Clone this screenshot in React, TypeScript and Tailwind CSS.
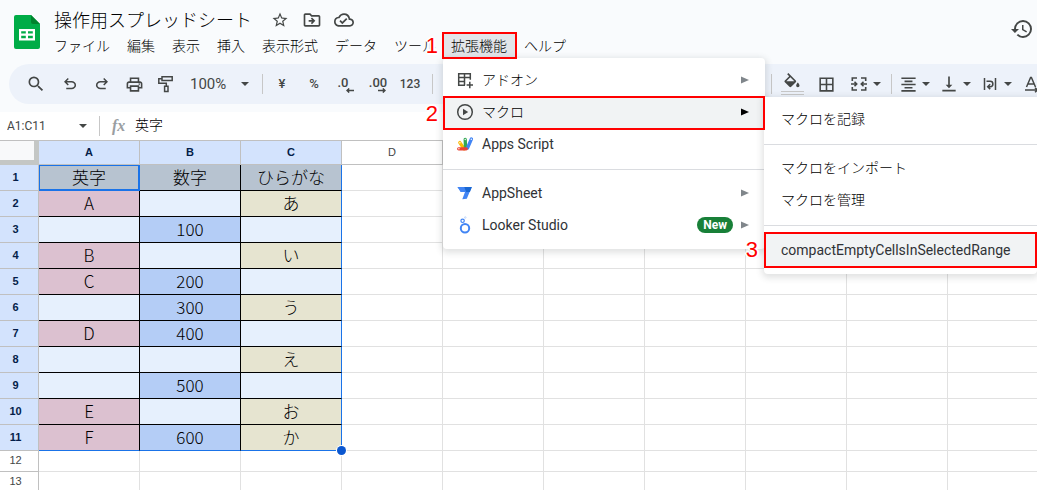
import type { ReactNode } from "react";
import {
  MdStarBorder,
  MdOutlineDriveFileMove,
  MdOutlineCloudDone,
  MdHistory,
  MdSearch,
  MdOutlinePrint,
  MdFormatColorFill,
  MdBorderAll,
  MdFormatAlignCenter,
  MdVerticalAlignBottom,
} from "react-icons/md";

const SANS = "font-['Roboto','Noto_Sans_CJK_JP',sans-serif]";

function SheetsLogo() {
  return (
    <svg width="26" height="34" viewBox="0 0 26 34" aria-hidden="true">
      <path d="M2 0h15l9 9v23a2 2 0 0 1-2 2H2a2 2 0 0 1-2-2V2a2 2 0 0 1 2-2z" fill="#00ac47" />
      <path d="M17 0l9 9h-7a2 2 0 0 1-2-2z" fill="#00832d" />
      <path d="M5 14h16v11.500H5zM7.200 16.200v2.400h4.600v-2.400zM14 16.200v2.400h4.800v-2.400zM7.200 20.800v2.400h4.600v-2.400zM14 20.800v2.400h4.800v-2.400z" fill="#fff" fillRule="evenodd" />
    </svg>
  );
}

function Caret() {
  return (
    <svg width="8" height="4" viewBox="0 0 8 4" aria-hidden="true">
      <path d="M0 0h8L4 4z" fill="#444746" />
    </svg>
  );
}

function UndoIcon({ flip = false }: { flip?: boolean }) {
  return (
    <svg width="18" height="18" viewBox="0 -960 960 960" fill="currentColor" className={flip ? "-scale-x-100" : ""} aria-hidden="true">
      <path d="M280-200v-80h284q63 0 109.500-40T720-420q0-60-46.500-100T564-560H312l104 104-56 56-200-200 200-200 56 56-104 104h252q97 0 169 63t72 157q0 94-72 157t-169 63H280Z" />
    </svg>
  );
}

function PaintIcon() {
  return (
    <svg width="18" height="18" viewBox="0 0 18 18" fill="none" stroke="currentColor" strokeWidth="1.500" aria-hidden="true">
      <path d="M5 1.800h10.200v3.800H5zM5 3.700H1.800v4.500h7.500v3" />
      <path d="M7.600 11.200h3.400v5.400H7.600z" />
    </svg>
  );
}

function DecimalIcon({ more = false }: { more?: boolean }) {
  return (
    <span className="flex flex-col items-center text-[13px] leading-[13px] font-medium">
      <span className={more ? "" : "pr-1.5"}>{more ? ".00" : ".0"}</span>
      <svg width="8" height="5" viewBox="0 0 8 5" fill="none" stroke="currentColor" strokeWidth="1.400" className="-mt-px ml-2" aria-hidden="true">
        {more ? <path d="M0 2.500h7M4.800.4L7 2.500 4.800 4.600" /> : <path d="M8 2.500H1M3.200.4L1 2.500l2.200 2.100" />}
      </svg>
    </span>
  );
}

function MergeIcon() {
  return (
    <svg width="18" height="18" viewBox="0 0 18 18" fill="none" stroke="currentColor" strokeWidth="1.600" aria-hidden="true">
      <path d="M7 3H2.300v3M7 15H2.300v-3M11 3h4.700v3M11 15h4.700v-3M1 9h5M17 9h-5M4.500 6.800L6.700 9l-2.200 2.200M13.500 6.800L11.300 9l2.200 2.200" />
    </svg>
  );
}

function WrapIcon() {
  return (
    <svg width="18" height="18" viewBox="0 0 18 18" fill="none" stroke="currentColor" strokeWidth="1.500" aria-hidden="true">
      <path d="M3.500 3v12M14.500 3v12M5.500 6.300h3.700a2.600 2.600 0 0 1 0 5.400H7M9.200 9.200L6.700 11.700l2.500 2.400" />
    </svg>
  );
}

function RotateIcon() {
  return (
    <svg width="18" height="18" viewBox="0 0 18 18" fill="none" stroke="currentColor" strokeWidth="1.500" aria-hidden="true">
      <path d="M4.500 12L8.600 2.500h.8L13.500 12M6 9h6M3 15h12M13 12.800l2.500 2.200-2.500 2.200" />
    </svg>
  );
}

function AddonIcon() {
  return (
    <svg width="18" height="18" viewBox="0 0 18 18" fill="none" stroke="#444746" strokeWidth="1.500" aria-hidden="true">
      <path d="M9 14.200H2.700V2.800h11.600v6M2.700 6.600h11.600M2.700 10.400H9M8.500 2.800v11.400M13.800 10.800v6.400M10.600 14h6.400" />
    </svg>
  );
}

function MacroIcon() {
  return (
    <svg width="18" height="18" viewBox="0 0 18 18" aria-hidden="true">
      <circle cx="9" cy="9" r="7.300" fill="none" stroke="#444746" strokeWidth="1.500" />
      <path d="M7 5.700v6.600L12.200 9z" fill="#444746" />
    </svg>
  );
}

function AppsScriptIcon() {
  return (
    <svg width="18" height="18" viewBox="0 0 18 18" strokeLinecap="round" strokeWidth="3.300" aria-hidden="true">
      <path d="M8 13.800L3.800 7.600" stroke="#fbbc04" />
      <path d="M9.500 12.500L9.200 4.400" stroke="#34a853" />
      <path d="M11.500 13L15.400 4" stroke="#4285f4" />
      <path d="M2.700 13.800h7.500" stroke="#ea4335" />
      <circle cx="2.900" cy="13.800" r=".7" fill="#fff" />
      <circle cx="3.900" cy="7.700" r=".7" fill="#fff" />
      <circle cx="9.200" cy="4.500" r=".7" fill="#fff" />
      <circle cx="15.300" cy="4.200" r=".7" fill="#fff" />
    </svg>
  );
}

function AppSheetIcon() {
  return (
    <svg width="18" height="18" viewBox="0 0 18 18" aria-hidden="true">
      <path d="M1.500 3h14.200L10.800 14.800 6.300 15.200 9 8H4.800z" fill="#4285f4" />
      <path d="M8.200 3h7.700l-2 5H7z" fill="#1967d2" />
      <path d="M1.500 3h6.700l2 5H4.800z" fill="#4285f4" />
    </svg>
  );
}

function LookerIcon() {
  return (
    <svg width="18" height="18" viewBox="0 0 18 18" fill="none" stroke="#4285f4" aria-hidden="true">
      <circle cx="9" cy="12.200" r="4.200" strokeWidth="2" />
      <circle cx="6.600" cy="4.800" r="1.700" strokeWidth="1.200" />
      <circle cx="9.300" cy="1.500" r=".8" strokeWidth=".7" stroke="#aecbfa" />
    </svg>
  );
}

function ToolButton({ label, className = "w-8", children }: { label: string; className?: string; children: ReactNode }) {
  return (
    <button type="button" aria-label={label} className={`flex h-8 shrink-0 items-center justify-center ${className}`}>
      {children}
    </button>
  );
}

function CaretButton({ label, children }: { label: string; children: ReactNode }) {
  return (
    <button type="button" aria-label={label} className="flex h-8 shrink-0 items-center">
      <span className="flex w-6 justify-center">{children}</span>
      <span className="flex w-3 justify-center">
        <Caret />
      </span>
    </button>
  );
}

function Separator({ className = "" }: { className?: string }) {
  return <span className={`h-5 w-px shrink-0 bg-[#c7c7c7] ${className}`} />;
}

function Step({ n, className }: { n: number; className: string }) {
  return (
    <span
      className={`absolute z-40 font-['Liberation_Sans',sans-serif] text-[22px] leading-6 text-[#ff0000] [text-shadow:2px_0_white,-2px_0_white,0_2px_white,0_-2px_white,1px_1px_white,-1px_-1px_white] ${className}`}
    >
      {n}
    </span>
  );
}

function Highlight({ className }: { className: string }) {
  return <span className={`pointer-events-none absolute z-30 border-2 border-[#ff0000] ${className}`} />;
}

/* Latin labels use the regular weight; the kana and kanji are set lighter. */
function labelClass(label: string) {
  return /^[\x20-\x7e]+$/.test(label) ? "font-normal text-[#303236]" : "font-light text-black";
}

function MenuItem({ icon, label, arrow, badge, active }: { icon: ReactNode; label: string; arrow?: boolean; badge?: string; active?: boolean }) {
  return (
    <button
      type="button"
      role="menuitem"
      className={`flex h-8 w-full items-center pr-4 pl-[13px] text-left text-[14px] ${active ? "bg-[#f1f3f4]" : ""}`}
    >
      <span className="w-[26px]">{icon}</span>
      <span className={`flex-1 ${labelClass(label)}`}>{label}</span>
      {badge && <span className="mr-2 rounded-full bg-[#188038] px-1.5 text-[12px] leading-4 font-bold text-white">{badge}</span>}
      {arrow && (
        <svg width="8" height="8" viewBox="0 0 8 8" aria-hidden="true">
          <path d="M0 .5v7L8 4z" fill={active ? "#000" : "#80868b"} />
        </svg>
      )}
    </button>
  );
}

function SubItem({ label, active }: { label: string; active?: boolean }) {
  return (
    <button
      type="button"
      role="menuitem"
      className={`flex h-8 w-full items-center px-[17px] text-left text-[14px] whitespace-nowrap ${labelClass(label)} ${active ? "bg-[#f1f3f4]" : ""}`}
    >
      {label}
    </button>
  );
}

function ExtensionsMenu() {
  return (
    <div role="menu" aria-label="拡張機能" className="absolute top-[26px] left-0 z-20 w-[322px] rounded bg-white pt-1.5 pb-2 shadow-[0_2px_6px_2px_rgba(60,64,67,0.15)]">
      <MenuItem icon={<AddonIcon />} label="アドオン" arrow />
      <div className="relative">
        <MenuItem icon={<MacroIcon />} label="マクロ" arrow active />
        <Highlight className="inset-x-0 top-0 -bottom-0.5" />
        <Step n={2} className="top-1.5 right-full mr-[5px]" />
        <div role="menu" aria-label="マクロ" className="absolute top-px left-full z-20 -ml-px w-[273px] rounded-b bg-white pt-1.5 pb-2 shadow-[0_2px_6px_2px_rgba(60,64,67,0.15)]">
          <SubItem label="マクロを記録" />
          <hr className="mt-[9px] mb-[7px] border-[#dadce0]" />
          <SubItem label="マクロをインポート" />
          <SubItem label="マクロを管理" />
          <hr className="mt-[9px] mb-2 border-[#dadce0]" />
          <div className="relative">
            <SubItem label="compactEmptyCellsInSelectedRange" active />
            <Highlight className="inset-x-0 -top-0.5 -bottom-0.5" />
            <Step n={3} className="top-1 right-full mr-1.5" />
          </div>
        </div>
      </div>
      <MenuItem icon={<AppsScriptIcon />} label="Apps Script" />
      <hr className="mt-[9px] mb-[7px] border-[#dadce0]" />
      <MenuItem icon={<AppSheetIcon />} label="AppSheet" arrow />
      <MenuItem icon={<LookerIcon />} label="Looker Studio" arrow badge="New" />
    </div>
  );
}

const MENUS = ["ファイル", "編集", "表示", "挿入", "表示形式", "データ", "ツール"];
const MENU_BUTTON = "h-[27px] px-2 pt-0.5 text-[14px] leading-[25px] font-light whitespace-nowrap text-black";

function Header() {
  return (
    <header className="flex items-start pt-[7px]">
      <div className="mt-2 ml-3.5 shrink-0">
        <SheetsLogo />
      </div>
      <div className="ml-1.5">
        <div className="flex h-[25px] items-center pl-2 text-[#444746]">
          <h1 className="pt-0.5 text-[18px] leading-[25px] font-light text-black">操作用スプレッドシート</h1>
          <button type="button" aria-label="スター" className="ml-[19px]"><MdStarBorder size={18} /></button>
          <button type="button" aria-label="移動" className="ml-[13px]"><MdOutlineDriveFileMove size={20} /></button>
          <button type="button" aria-label="保存状態" className="ml-3"><MdOutlineCloudDone size={20} /></button>
        </div>
        <nav className="flex gap-px">
          {MENUS.map((m) => (
            <button key={m} type="button" className={MENU_BUTTON}>{m}</button>
          ))}
          <div className="relative -ml-0.5">
            <button type="button" aria-haspopup="menu" aria-expanded="true" className={`${MENU_BUTTON} bg-[#e2e5e9]`}>拡張機能</button>
            <Highlight className="-right-0.5 -left-px top-0 bottom-0" />
            <Step n={1} className="top-0.5 right-full mr-[5px]" />
            <ExtensionsMenu />
          </div>
          <button type="button" className={MENU_BUTTON}>ヘルプ</button>
        </nav>
      </div>
      <button type="button" aria-label="変更履歴" className="mt-2.5 mr-[3px] ml-auto text-[#444746]">
        <MdHistory size={24} />
      </button>
    </header>
  );
}

function Toolbar() {
  return (
    <div role="toolbar" className="mt-[5px] ml-[9px] flex h-10 items-center overflow-hidden rounded-l-full bg-[#edf2fa] pl-[11px] text-[#444746]">
      <ToolButton label="検索"><MdSearch size={20} /></ToolButton>
      <ToolButton label="元に戻す" className="ml-0.5 w-8"><UndoIcon /></ToolButton>
      <ToolButton label="やり直し"><UndoIcon flip /></ToolButton>
      <ToolButton label="印刷"><MdOutlinePrint size={19} /></ToolButton>
      <ToolButton label="書式を貼り付け"><PaintIcon /></ToolButton>
      <button type="button" className="flex h-8 w-20 shrink-0 items-center justify-between pr-[13px] pl-2 text-[15px]">
        100% <Caret />
      </button>
      <Separator className="mr-[3px]" />
      <ToolButton label="通貨" className="w-8 text-[13px] font-medium">¥</ToolButton>
      <ToolButton label="パーセント" className="w-8 text-[13px] font-medium">%</ToolButton>
      <ToolButton label="小数点以下の桁数を減らす"><DecimalIcon /></ToolButton>
      <ToolButton label="小数点以下の桁数を増やす"><DecimalIcon more /></ToolButton>
      <ToolButton label="表示形式の詳細" className="w-8 text-[12px] font-medium">123</ToolButton>
      <Separator className="ml-1.5" />
      <div className="-mr-1.5 ml-auto flex items-center">
        <Separator className="mr-1" />
        <ToolButton label="塗りつぶしの色">
          <span className="flex h-[22px] w-[23px] flex-col border-b border-[#c7c7c7]">
            <span className="flex h-[19px] justify-center border-b border-[#c7c7c7]">
              <span className="h-4 overflow-hidden"><MdFormatColorFill size={20} /></span>
            </span>
          </span>
        </ToolButton>
        <ToolButton label="枠線" className="mx-0.5 w-8"><MdBorderAll size={19} /></ToolButton>
        <span className="ml-[3px] flex"><CaretButton label="セルを結合"><MergeIcon /></CaretButton></span>
        <Separator className="mr-1 ml-2" />
        <div className="flex gap-[5px]">
          <CaretButton label="水平方向の配置"><MdFormatAlignCenter size={19} /></CaretButton>
          <CaretButton label="垂直方向の配置"><MdVerticalAlignBottom size={20} /></CaretButton>
          <CaretButton label="テキストを折り返す"><WrapIcon /></CaretButton>
          <ToolButton label="テキストの回転" className="w-6"><RotateIcon /></ToolButton>
        </div>
      </div>
    </div>
  );
}

function FormulaBar() {
  return (
    <div className="mt-2 flex h-7 items-center bg-white">
      <input aria-label="名前ボックス" defaultValue="A1:C11" className="w-[79px] shrink-0 pl-[7px] text-[12px] text-[#444746] outline-none" />
      <Caret />
      <Separator className="ml-3" />
      <span className="ml-3 w-4 font-['Liberation_Serif',serif] text-[16px] font-bold text-[#9a9ea2] italic">fx</span>
      <input aria-label="数式バー" defaultValue="英字" className="ml-[7px] min-w-0 flex-1 pb-px text-[14px] font-light text-black outline-none" />
    </div>
  );
}

const COLUMNS = ["A", "B", "C", "D", "E", "F", "G", "H", "I", "J"];
const ROWS: string[][] = [
  ["英字", "数字", "ひらがな"],
  ["A", "", "あ"],
  ["", "100", ""],
  ["B", "", "い"],
  ["C", "200", ""],
  ["", "300", "う"],
  ["D", "400", ""],
  ["", "", "え"],
  ["", "500", ""],
  ["E", "", "お"],
  ["F", "600", "か"],
  [],
  [],
];
const FILLS = ["bg-[#dcc1d0]", "bg-[#b4cdf6]", "bg-[#e6e4d0]"];

function cellClass(row: number, col: number, value?: string) {
  if (row > 10 || col > 2) return "border-[#e1e1e1] bg-white";
  const fill = row === 0 ? "bg-[#b7c3d0]" : value ? FILLS[col] : "bg-[#e6f0fd]";
  const right = col === 2 ? "border-r-[#1a73e8]" : "border-r-black";
  const bottom = row === 10 ? "border-b-[#1a73e8]" : "border-b-black";
  return `${fill} ${right} ${bottom}`;
}

function Grid() {
  return (
    <table className="w-[1049px] table-fixed border-separate border-spacing-0 bg-white">
      <colgroup>
        <col className="w-[39px]" />
        {COLUMNS.map((c) => <col key={c} className="w-[101px]" />)}
      </colgroup>
      <thead>
        <tr className="h-[25px] font-['Liberation_Sans',sans-serif] text-[11px]">
          <td className="border-t border-r-[5px] border-b-[5px] border-[#c4c7c5] border-t-[#c0c0c0] bg-[#f8f9fa] p-0" />
          {COLUMNS.map((c, i) => (
            <th
              key={c}
              scope="col"
              className={`border-t border-r border-b border-[#c0c0c0] p-0 ${i < 3 ? "bg-[#d3e3fd] font-bold text-[#041e49]" : "bg-white font-normal text-[#444746]"}`}
            >
              {c}
            </th>
          ))}
        </tr>
      </thead>
      <tbody>
        {ROWS.map((row, r) => (
          <tr key={r} className={r < 11 ? "h-[26px]" : "h-[21px]"}>
            <th
              scope="row"
              className={`border-r border-b border-[#c0c0c0] p-0 pr-[7px] pb-0.5 font-['Liberation_Sans',sans-serif] text-[11px] leading-4 ${r < 11 ? "bg-[#d3e3fd] font-bold text-[#041e49]" : "bg-white font-normal text-[#444746]"}`}
            >
              {r + 1}
            </th>
            {COLUMNS.map((c, i) => (
              <td
                key={c}
                className={`relative border-r border-b p-0 pb-0.5 text-center font-['Noto_Sans_CJK_JP',sans-serif] text-[17px] leading-[18px] font-light text-black ${cellClass(r, i, row[i])}`}
              >
                {row[i]}
                {r === 0 && i === 0 && <span className="absolute top-0 -right-px -bottom-px left-0 border border-r-2 border-b-2 border-[#1a73e8]" />}
                {r === 10 && i === 2 && <span className="absolute -right-[5px] -bottom-[5px] z-10 size-[9px] rounded-full bg-[#0b57d0] ring-1 ring-white" />}
              </td>
            ))}
          </tr>
        ))}
      </tbody>
    </table>
  );
}

export default function App() {
  return (
    <div className={`h-screen overflow-hidden bg-[#f9fbfd] ${SANS}`}>
      <Header />
      <Toolbar />
      <FormulaBar />
      <Grid />
    </div>
  );
}
